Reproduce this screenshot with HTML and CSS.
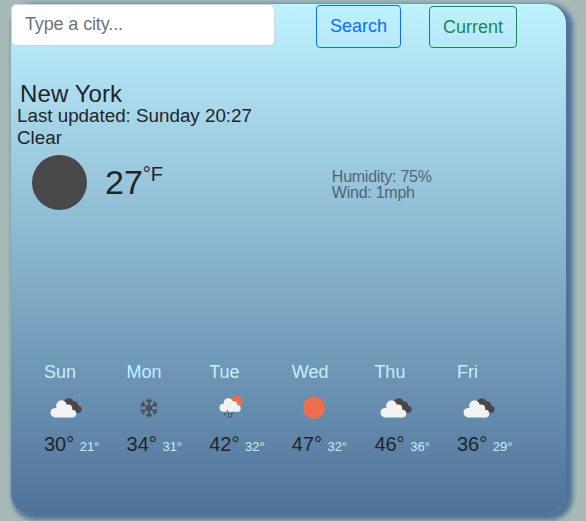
FILE: index.html
```html
<!DOCTYPE html>
<html lang="en">
<head>
<meta charset="utf-8">
<title>Weather</title>
<link rel="stylesheet" href="styles.css">
</head>
<body>
<svg class="sprites" width="0" height="0" aria-hidden="true">
  <symbol id="clouds" viewBox="0 0 32 22">
    <g fill="#48484a"><circle cx="18.7" cy="6" r="4.8"/><circle cx="24" cy="8.5" r="4.3"/><circle cx="28" cy="12.3" r="3.6"/><path d="M18 6h6l4 9h-5z"/></g>
    <g fill="#f2f2f2"><circle cx="11.5" cy="8.7" r="5.4"/><circle cx="5.3" cy="15.7" r="4.8"/><circle cx="18.2" cy="11.5" r="4"/><circle cx="22.3" cy="16.6" r="3.9"/><path d="M6 11h13l3.5 9.5H5.3z"/></g>
  </symbol>
  <symbol id="snow" viewBox="0 0 20 20">
    <g fill="none" stroke="#48484a" stroke-width="1.4" stroke-linecap="round">
      <path id="arm" d="M10 10V1M7.6 2.2L10 4.6l2.4-2.4"/>
      <use href="#arm" transform="rotate(60 10 10)"/><use href="#arm" transform="rotate(120 10 10)"/>
      <use href="#arm" transform="rotate(180 10 10)"/><use href="#arm" transform="rotate(240 10 10)"/>
      <use href="#arm" transform="rotate(300 10 10)"/>
      <path d="M10 7l2.6 1.5v3L10 13l-2.6-1.5v-3z" stroke-width="1"/>
    </g>
  </symbol>
  <symbol id="rain" viewBox="0 0 24 24">
    <circle cx="17.5" cy="6.2" r="6" fill="#ec6e4c"/>
    <g fill="#f2f2f2"><circle cx="9.3" cy="6.8" r="4.6"/><circle cx="4.5" cy="11.8" r="4"/><circle cx="14.8" cy="8.8" r="3.5"/><circle cx="18.3" cy="12.4" r="3.4"/><path d="M4.5 8h11l3 7.8h-14z"/></g>
    <path d="M8.2 14.8l-.2.8M6.1 17.5l-.7 1.2M9.9 17.2l-.6 1.4M13.2 17.2l-.6 1.4M8.9 20.4l-.3.8M12.2 20l-.5 1.4" stroke="#48484a" stroke-width="1.2" stroke-linecap="round"/>
  </symbol>
  <symbol id="sun" viewBox="0 0 22 22"><circle cx="11" cy="11" r="11" fill="#ec6e4c"/></symbol>
</svg>
<main class="card">
  <form class="search">
    <input class="city-input" type="text" placeholder="Type a city...">
    <button class="btn btn-search" type="button">Search</button>
    <button class="btn btn-current" type="button">Current</button>
  </form>
  <h1 class="city">New York</h1>
  <ul class="status"><li>Last updated: Sunday 20:27</li><li>Clear</li></ul>
  <section class="now">
    <div class="moon"></div>
    <div class="temp">27</div><div class="unit">°F</div>
    <ul class="details"><li>Humidity: 75%</li><li>Wind: 1mph</li></ul>
  </section>
  <section class="forecast">
    <div class="day"><div class="name">Sun</div><div class="icon"><svg class="clouds"><use href="#clouds"/></svg></div><div class="range"><span>30°</span> <span class="min">21°</span></div></div>
    <div class="day"><div class="name">Mon</div><div class="icon"><svg class="snow"><use href="#snow"/></svg></div><div class="range"><span>34°</span> <span class="min">31°</span></div></div>
    <div class="day"><div class="name">Tue</div><div class="icon"><svg class="rain"><use href="#rain"/></svg></div><div class="range"><span>42°</span> <span class="min">32°</span></div></div>
    <div class="day"><div class="name">Wed</div><div class="icon"><svg class="sun"><use href="#sun"/></svg></div><div class="range"><span>47°</span> <span class="min">32°</span></div></div>
    <div class="day"><div class="name">Thu</div><div class="icon"><svg class="clouds"><use href="#clouds"/></svg></div><div class="range"><span>46°</span> <span class="min">36°</span></div></div>
    <div class="day"><div class="name">Fri</div><div class="icon"><svg class="clouds"><use href="#clouds"/></svg></div><div class="range"><span>36°</span> <span class="min">29°</span></div></div>
  </section>
</main>
</body>
</html>
```
FILE: styles.css
```css
* { box-sizing: border-box; margin: 0; padding: 0; }
html { overflow: hidden; }
body {
  height: 521px;
  padding: 4px 0 0 11px;
  background: #a7bab7;
  color: #212529;
  font-family: "Liberation Sans", Arial, sans-serif;
  font-size: 18px;
}
.sprites { display: none; }
ul { list-style: none; }
.card {
  width: 555px;
  height: 510px;
  border-radius: 20px;
  background: linear-gradient(#bff2ff, #4f7299);
  box-shadow: 4px 3px 5px 3px #4f7299;
}
.search { display: flex; height: 44px; align-items: flex-start; }
.city-input {
  width: 264px;
  height: 42px;
  padding: 0 13px 2px;
  border: 1px solid #ced4da;
  border-radius: 5px;
  background: #fff;
  font: inherit;
  letter-spacing: -.13px;
}
.city-input::placeholder { color: #6c757d; opacity: 1; }
.btn {
  height: 43px;
  margin-top: 1px;
  border: 1px solid;
  border-radius: 4px;
  background: transparent;
  font: inherit;
}
.btn-search { width: 85px; margin-left: 41px; color: #0d6efd; }
.btn-current { width: 88px; height: 42px; margin: 2px 0 0 28px; color: #198754; }
.city { margin: 35px 0 0 9px; font-size: 24px; font-weight: 400; line-height: 22px; letter-spacing: .1px; }
.status { padding-left: 6px; font-size: 18.8px; line-height: 22px; }
.now { display: flex; height: 66px; margin-top: 3px; }
.moon { width: 55px; height: 55px; margin: 3px 0 0 21px; border-radius: 50%; background: #48484a; }
.temp { margin: 8px 0 0 18px; font-size: 34px; line-height: 44px; }
.unit { width: 26px; margin-top: 8px; font-size: 20px; line-height: 28px; }
.details { margin: 17px 0 0 163px; opacity: .6; font-size: 16px; line-height: 16px; letter-spacing: -.25px; }
.forecast { display: grid; grid-template-columns: repeat(6, 82.6px); margin: 142px 0 0 33px; }
.name { color: #bff2ff; line-height: 24px; }
.icon { display: flex; width: 44px; height: 48px; align-items: center; justify-content: center; }
.icon svg { display: block; }
.clouds { width: 32px; height: 22px; }
.snow { width: 20px; height: 20px; }
.rain { width: 24px; height: 24px; }
.sun { width: 22px; height: 22px; }
.range { font-size: 20px; line-height: 24px; white-space: nowrap; }
.min { color: #bff2ff; font-size: 13px; }
```
